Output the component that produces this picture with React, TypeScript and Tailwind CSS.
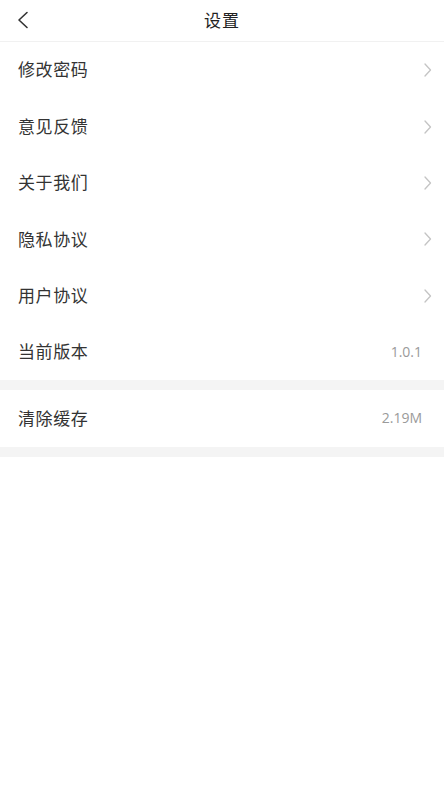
import React from "react";

const font = { fontFamily: '"Noto Sans CJK SC", "Noto Sans", sans-serif' };

type Item = { label: string; value?: string; arrow?: boolean };

const group1: Item[] = [
  { label: "修改密码", arrow: true },
  { label: "意见反馈", arrow: true },
  { label: "关于我们", arrow: true },
  { label: "隐私协议", arrow: true },
  { label: "用户协议", arrow: true },
  { label: "当前版本", value: "1.0.1" },
];

const Chevron: React.FC = () => (
  <svg width="9" height="16" viewBox="0 0 9 16" fill="none">
    <path d="M2 2 L7.5 8 L2 14" stroke="#c4c4c4" strokeWidth="1.3" strokeLinecap="round" strokeLinejoin="round" />
  </svg>
);

const Row: React.FC<{ item: Item }> = ({ item }) => (
  <div className="flex items-center justify-between h-[56.4px] pl-[18px] pr-[12px] bg-white">
    <span className="text-[17px] text-[#333333] tracking-[0.6px] -mt-[2px]">{item.label}</span>
    {item.arrow ? (
      <Chevron />
    ) : (
      <span className="text-[14px] text-[#9a9a9a] mr-[10px] -mt-[2px]" style={{ fontFamily: '"Open Sans", Lato, sans-serif' }}>
        {item.value}
      </span>
    )}
  </div>
);

export default function App() {
  return (
    <div className="w-[444px] min-h-[794px] bg-white" style={font}>
      <div className="relative h-[42px] flex items-center justify-center border-b border-[#f1f1f1]">
        <svg
          width="14"
          height="18"
          viewBox="0 0 14 18"
          fill="none"
          className="absolute left-[16px] top-[11px]"
        >
          <path d="M11 1.5 L3 9 L11 16.5" stroke="#333" strokeWidth="1.6" strokeLinecap="round" strokeLinejoin="round" />
        </svg>
        <span className="text-[17px] text-[#222222] tracking-[1px] -mt-[2px]">设置</span>
      </div>
      <div>
        {group1.map((it) => (
          <Row key={it.label} item={it} />
        ))}
      </div>
      <div className="h-[10px] bg-[#f4f4f4]" />
      <Row item={{ label: "清除缓存", value: "2.19M" }} />
      <div className="h-[10px] bg-[#f4f4f4]" />
    </div>
  );
}
